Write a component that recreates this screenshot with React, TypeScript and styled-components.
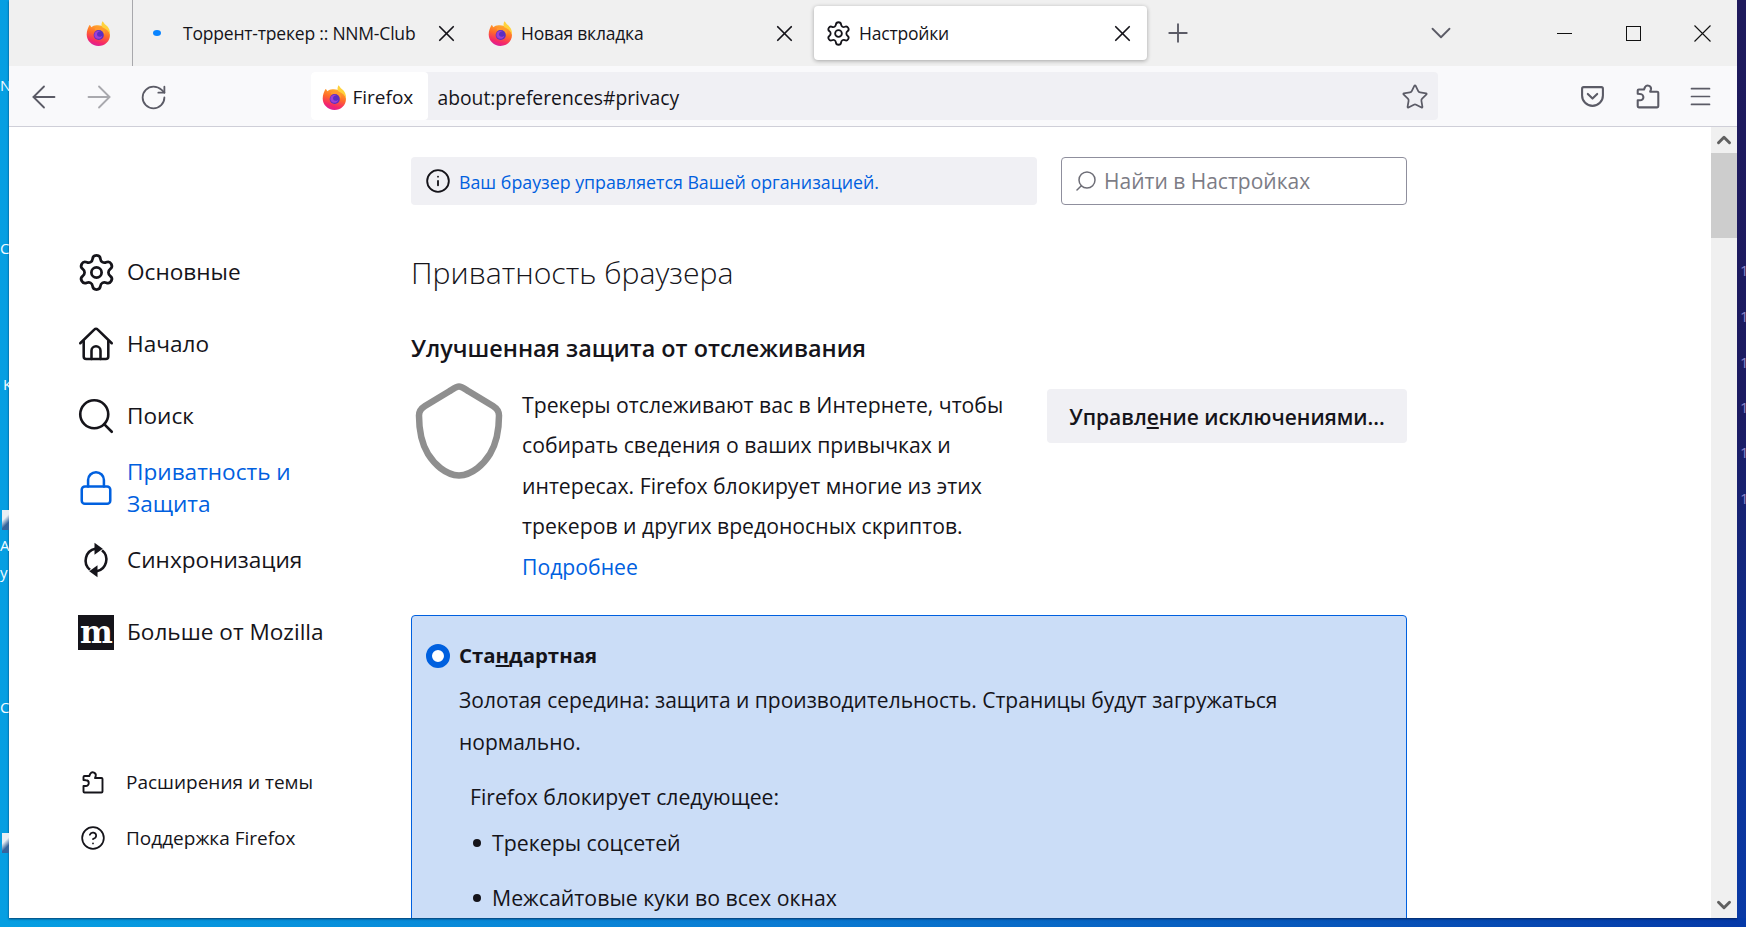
import { useId } from "react";
import styled, { createGlobalStyle } from "styled-components";
import {
  ArrowLeft,
  ArrowRight,
  ChevronDown,
  ChevronUp,
  CircleHelp,
  Info,
  Lock,
  Menu,
  Plus,
  RotateCw,
  Search,
  Settings,
  Star,
  X,
} from "lucide-react";

const INK = "#15141a";
const BLUE = "#0060df";
const FONT = `"Open Sans", "Noto Sans", sans-serif`;

const GlobalStyle = createGlobalStyle`
  html, body {
    margin: 0;
    padding: 0;
    width: 1746px;
    height: 927px;
    overflow: hidden;
    font-family: ${FONT};
    color: ${INK};
  }

  svg {
    flex: none;
  }
`;

const Desktop = styled.div`
  display: flex;
  width: 1746px;
  height: 927px;
  background: linear-gradient(90deg, #069fe2 0%, #0a7bd2 45%, #0539a8 100%);
`;

const LeftEdge = styled.div`
  position: relative;
  width: 9px;
  height: 918px;
  overflow: hidden;
`;

const DesktopGlyph = styled.span<{ $top: number; $left: number; $color?: string }>`
  position: absolute;
  top: ${(p) => p.$top}px;
  left: ${(p) => p.$left}px;
  font-size: 15px;
  line-height: 16px;
  color: ${(p) => p.$color ?? "#f4faff"};
`;

const DesktopIconStub = styled.span<{ $top: number }>`
  position: absolute;
  top: ${(p) => p.$top}px;
  left: 2px;
  width: 7px;
  height: 20px;
  background: linear-gradient(135deg, #e8eef4 40%, #36649c 70%);
`;

const RightEdge = styled.div`
  position: relative;
  width: 9px;
  height: 918px;
  overflow: hidden;
  background: linear-gradient(180deg, #1f1a5c 0%, #1c1b62 45%, #0f2f8f 72%, #0a3aa6 100%);
`;

const Window = styled.div`
  display: flex;
  flex-direction: column;
  width: 1728px;
  height: 918px;
  background: #fff;
  box-shadow: 0 1px 2px rgba(0, 20, 60, 0.7);
  overflow: hidden;
`;

const TabStrip = styled.div`
  display: flex;
  align-items: center;
  height: 66px;
  flex: none;
  background: #f0f0f0;
`;

const PinnedTab = styled.div`
  display: flex;
  align-items: center;
  justify-content: flex-end;
  width: 124px;
  height: 66px;
  padding-right: 20px;
  box-sizing: border-box;
  border-right: 1px solid #a8a8ac;
`;

const Tab = styled.div<{ $active?: boolean }>`
  display: flex;
  align-items: center;
  width: 333px;
  height: 54px;
  margin-left: 5px;
  padding: 0 11px 0 13px;
  box-sizing: border-box;
  font-size: 17.5px;
  border-radius: 4px;
  background: ${(p) => (p.$active ? "#fff" : "transparent")};
  box-shadow: ${(p) => (p.$active ? "0 1px 4px rgba(0, 0, 0, 0.32)" : "none")};
`;

const TabIcon = styled.span`
  display: flex;
  align-items: center;
  justify-content: center;
  flex: none;
  width: 22px;
  height: 24px;
  margin-right: 10px;
`;

const TabDot = styled.span`
  width: 8px;
  height: 6px;
  margin-right: 10px;
  border-radius: 50%;
  background: #0a84ff;
`;

const TabTitle = styled.span`
  flex: 1;
  white-space: nowrap;
  letter-spacing: -0.2px;
`;

const NewTab = styled.div`
  display: flex;
  margin-left: 16px;
  color: #5b5b66;
`;

const TabList = styled.div`
  display: flex;
  justify-content: center;
  width: 40px;
  margin-left: auto;
  margin-right: 69px;
  color: #5b5b66;
`;

const Controls = styled.div`
  display: flex;
`;

const ControlButton = styled.div`
  display: flex;
  align-items: center;
  justify-content: center;
  width: 69px;
  height: 66px;
`;

const Toolbar = styled.div`
  display: flex;
  align-items: center;
  height: 60px;
  flex: none;
  padding-left: 8px;
  background: #f9f9fb;
  border-bottom: 1px solid #cfcfd8;
`;

const NavButton = styled.div<{ $muted?: boolean }>`
  display: flex;
  justify-content: center;
  width: 54.5px;
  margin-top: 2px;
  color: ${(p) => (p.$muted ? "#a9a9ae" : "#5b5b66")};
`;

const UrlBar = styled.div`
  display: flex;
  align-items: center;
  width: 1127px;
  height: 48px;
  margin-left: 130px;
  border-radius: 4px;
  background: #f0f0f4;
`;

const IdentityChip = styled.div`
  display: flex;
  align-items: center;
  gap: 5px;
  width: 117px;
  height: 48px;
  padding: 2px 0 0 10px;
  box-sizing: border-box;
  border-radius: 4px;
  background: #fff;
  font-size: 19px;
`;

const UrlText = styled.div`
  flex: 1;
  margin-left: 10px;
  padding-top: 2px;
  font-size: 19.3px;
`;

const StarSlot = styled.div`
  display: flex;
  margin: 2px 9px 0 0;
  color: #5b5b66;
`;

const ToolbarActions = styled.div`
  display: flex;
  align-items: center;
  margin-left: 142px;
  gap: 30px;
  color: #5b5b66;
`;

const MenuSlot = styled.span`
  display: flex;
  margin-left: -4px;
`;

const Viewport = styled.div`
  display: flex;
  flex: 1;
  min-height: 0;
`;

const Sidebar = styled.nav`
  display: flex;
  flex-direction: column;
  flex: none;
  width: 402px;
  padding: 109px 0 0 69px;
  box-sizing: border-box;
`;

const NavItem = styled.div<{ $active?: boolean }>`
  display: flex;
  align-items: center;
  gap: 13px;
  height: 72px;
  font-size: 22.6px;
  line-height: 32px;
  color: ${(p) => (p.$active ? BLUE : INK)};
`;

const NavIcon = styled.span`
  display: flex;
  align-items: center;
  justify-content: center;
  flex: none;
  width: 36px;
  height: 36px;
`;

const MozillaMark = styled.span`
  display: flex;
  align-items: center;
  justify-content: center;
  flex: none;
  width: 36px;
  height: 35px;
  background: #15141a;
  color: #fff;
  font-family: "DejaVu Serif", serif;
  font-weight: 700;
  font-size: 31px;
  line-height: 28px;
  letter-spacing: -1px;
`;

const SidebarFooter = styled.div`
  display: flex;
  flex-direction: column;
  margin-top: 86px;
  padding-left: 3px;
`;

const FooterItem = styled.div`
  display: flex;
  align-items: center;
  gap: 21px;
  height: 56px;
  font-size: 19px;
`;

const FooterIcon = styled.span`
  display: flex;
  align-items: center;
  justify-content: center;
  flex: none;
  width: 24px;
`;

const Main = styled.main`
  flex: none;
  width: 996px;
  padding-top: 30px;
`;

const TopRow = styled.div`
  display: flex;
  gap: 24px;
`;

const PolicyNotice = styled.div`
  display: flex;
  align-items: center;
  gap: 8px;
  width: 626px;
  height: 48px;
  padding: 0 0 0 14px;
  box-sizing: border-box;
  border-radius: 4px;
  background: #f0f0f4;
  font-size: 17.8px;
  color: ${BLUE};
`;

const PolicyText = styled.span`
  padding-top: 2px;
`;

const SearchField = styled.div`
  display: flex;
  align-items: center;
  gap: 6px;
  width: 346px;
  height: 48px;
  padding-left: 12px;
  box-sizing: border-box;
  border: 1px solid #8f8f9d;
  border-radius: 4px;
  font-size: 21px;
  color: #7c7c85;
`;

const FlippedIcon = styled.span`
  display: flex;
  transform: scaleX(-1);
`;

const PageTitle = styled.h1`
  margin: 48px 0 0;
  font-size: 30.2px;
  line-height: 40px;
  font-weight: 300;
`;

const SectionTitle = styled.h2`
  margin: 40px 0 0;
  font-size: 23.4px;
  line-height: 30px;
  font-weight: 600;
`;

const IntroRow = styled.div`
  display: flex;
  margin-top: 22px;
`;

const ShieldBox = styled.div`
  flex: none;
  width: 111px;
  height: 96px;
  margin-top: -2px;
  margin-bottom: 2px;
  padding-left: 4px;
  box-sizing: border-box;
`;

const IntroText = styled.p`
  flex: none;
  width: 525px;
  margin: 0;
  font-size: 21.2px;
  line-height: 40.4px;
`;

const LearnMore = styled.a`
  display: block;
  color: ${BLUE};
`;

const ExceptionsButton = styled.div`
  display: flex;
  align-items: center;
  justify-content: center;
  flex: none;
  width: 360px;
  height: 54px;
  margin-top: 4px;
  padding-top: 2px;
  box-sizing: border-box;
  border-radius: 4px;
  background: #f0f0f4;
  font-size: 21px;
  font-weight: 600;
`;

const BlockingCard = styled.section`
  height: 400px;
  margin-top: 28px;
  padding: 24px 0 0 47px;
  box-sizing: border-box;
  border: 1px solid ${BLUE};
  border-radius: 4px;
  background: #cbddf7;
`;

const CardHeader = styled.div`
  position: relative;
  font-size: 20.4px;
  line-height: 30px;
  font-weight: 700;
`;

const Radio = styled.span`
  position: absolute;
  left: -33px;
  top: 4px;
  width: 12px;
  height: 12px;
  border: 6px solid ${BLUE};
  border-radius: 50%;
  background: #fff;
  box-sizing: content-box;
`;

const CardText = styled.p`
  margin: 10px 0 0;
  font-size: 21px;
  line-height: 41.5px;
`;

const BlocksLabel = styled.div`
  margin: 19px 0 0 11px;
  font-size: 21.2px;
  line-height: 30px;
`;

const BlocksList = styled.ul`
  display: flex;
  flex-direction: column;
  gap: 25px;
  margin: 16px 0 0 11px;
  padding: 0;
  list-style: none;
`;

const BlocksItem = styled.li`
  display: flex;
  align-items: center;
  gap: 11px;
  font-size: 21.3px;
  line-height: 30px;

  &::before {
    content: "";
    width: 8px;
    height: 8px;
    margin-left: 3px;
    border-radius: 50%;
    background: ${INK};
  }
`;

const Spacer = styled.div`
  flex: 1;
`;

const Scrollbar = styled.div`
  display: flex;
  flex-direction: column;
  flex: none;
  width: 26px;
  background: #f0f0f0;
`;

const ScrollArrow = styled.div<{ $end?: boolean }>`
  display: flex;
  align-items: center;
  justify-content: center;
  height: 26px;
  margin-top: ${(p) => (p.$end ? "auto" : "0")};
  color: #606060;
`;

const ScrollThumb = styled.div`
  height: 85px;
  background: #cdcdcd;
`;

const FirefoxLogo = ({ size = 27 }: { size?: number }) => {
  const id = useId();
  return (
    <svg width={size} height={size} viewBox="0 0 24 24">
      <defs>
        <linearGradient id={id} x1="0.7" y1="0" x2="0.35" y2="1">
          <stop offset="0" stopColor="#ffb52e" />
          <stop offset="0.45" stopColor="#ff6a2a" />
          <stop offset="0.8" stopColor="#f5276a" />
          <stop offset="1" stopColor="#d91e9a" />
        </linearGradient>
      </defs>
      <path
        fill={`url(#${id})`}
        d="M4 4.5c.6.2 1.3 1.2 1.5 2C7 5.2 8.7 4.6 10.5 4.7c3-.2 5 .5 6.5 1.7 2.5 1 5 3.4 5.2 6.6C22.4 18.800 17.600 23 12 23 6.200 23 1.500 18.400 1.500 12.800 1.500 9.500 2.800 6.800 4 4.500z"
      />
      <path fill="#ffd23c" d="M15.500 1c1.400 1.300 1.600 2.400 3 3.500 2.600 2 4 4.600 3.700 8.500-.9-3-3-5-6.700-6.500C14.300 5 14.500 3 15.500 1z" />
      <path fill="#ff9a2e" d="M8.500 7.500c2-1.600 4.500-1.700 6.500-.5 2.300 1.400 3.300 3.700 2.800 6-1-2.500-3-3.600-5.600-3.500-1.700 0-3.200.2-3.700-2z" />
      <circle cx="12.200" cy="13.300" r="4.500" fill="#5a2ec2" />
      <path fill="#9d3fd6" d="M8.500 12c.8-2 3.400-3 5.400-2-1.600 0-3 1-3.200 2.400-.2 1.500 1 2.600 2.400 2.500 1 0 1.800-.5 2.400-1.200-.4 2-2.200 3.300-4.200 3-2.300-.4-3.500-2.500-2.800-4.700z" />
    </svg>
  );
};

const ShieldIcon = () => (
  <svg width="88" height="96" viewBox="0 0 88 96" fill="none" stroke="#8f8f8f" strokeWidth="6.5" strokeLinejoin="round">
    <path d="M44 3.500C47 3.500 50 6 54 8.500L78 23c4 2.500 6 5 6 9.500 0 13-2 27-9 38.500-6 9.500-17 21-31 21.500-14-.5-25-12-31-21.500C6 59.500 4 45.500 4 32.500 4 28 6 25.500 10 23L34 8.500C38 6 41 3.500 44 3.500z" />
  </svg>
);

const HomeIcon = () => (
  <svg width="36" height="36" viewBox="0 0 24 24" fill="none" stroke={INK} strokeWidth="1.7" strokeLinecap="round" strokeLinejoin="round">
    <path d="M1.500 11.500 11 2.300a1.400 1.400 0 0 1 2 0l9.500 9.200" />
    <path d="M3.800 10v10.300a1.700 1.700 0 0 0 1.700 1.700h13a1.700 1.700 0 0 0 1.700-1.700V10" />
    <path d="M9 22v-5.500a3 3 0 0 1 6 0V22" />
  </svg>
);

const SyncIcon = () => (
  <svg width="36" height="36" viewBox="0 0 24 24" fill="none" stroke={INK} strokeWidth="1.7">
    <path d="M11.500 4.500A8 8 0 0 0 8 18.500" />
    <path d="M12.500 19.500A8 8 0 0 0 16 5.500" />
    <path fill={INK} stroke="none" d="M11 .5v8l5.500-4zM13 15.500v8l-5.500-4z" />
  </svg>
);

const PuzzleIcon = ({ size, color }: { size: number; color: string }) => (
  <svg width={size} height={size} viewBox="0 0 24 24" fill="none" stroke={color} strokeWidth="1.9" strokeLinejoin="round">
    <path d="M3.500 22.500a1 1 0 0 1-1-1V16h2.200a2.900 2.900 0 0 0 .3-5.800l-2.500-.2V7a1 1 0 0 1 1-1h4.800l1-2.300a3 3 0 0 1 5.400 2.400L14 8h6.500a1 1 0 0 1 1 1v12.500a1 1 0 0 1-1 1z" />
  </svg>
);

const PocketIcon = () => (
  <svg width="25" height="25" viewBox="0 0 24 24" fill="none" stroke="#5b5b66" strokeWidth="2" strokeLinecap="round" strokeLinejoin="round">
    <path d="M3.500 3h17A1.500 1.500 0 0 1 22 4.500V11a10 10 0 0 1-20 0V4.500A1.500 1.500 0 0 1 3.500 3z" />
    <path d="m7.500 9.500 4.500 4.500 4.500-4.500" />
  </svg>
);

const MinimizeIcon = () => (
  <svg width="15" height="15" viewBox="0 0 15 15" stroke="#111" strokeWidth="1">
    <path d="M0 7.500h15" />
  </svg>
);

const MaximizeIcon = () => (
  <svg width="15" height="15" viewBox="0 0 15 15" fill="none" stroke="#111" strokeWidth="1">
    <rect x="0.500" y="0.500" width="14" height="14" />
  </svg>
);

const CloseIcon = () => (
  <svg width="17" height="17" viewBox="0 0 17 17" stroke="#111" strokeWidth="1.100">
    <path d="m.5.5 16 16M16.500.5l-16 16" />
  </svg>
);

const leftGlyphs = [
  { text: "N", top: 77, left: 0 },
  { text: "C", top: 240, left: 0 },
  { text: "K", top: 376, left: 3 },
  { text: "A", top: 537, left: 0 },
  { text: "y", top: 564, left: 0 },
  { text: "C", top: 699, left: 0 },
];

const rightGlyphs = [262, 308, 354, 399, 444, 490];

const navItems = [
  { label: "Основные", icon: <Settings size={41} strokeWidth={1.6} color={INK} /> },
  { label: "Начало", icon: <HomeIcon /> },
  { label: "Поиск", icon: <Search size={42} strokeWidth={1.5} color={INK} /> },
];

const App = () => (
  <>
    <GlobalStyle />
    <Desktop>
      <LeftEdge>
        {leftGlyphs.map((g) => (
          <DesktopGlyph key={g.top} $top={g.top} $left={g.left}>
            {g.text}
          </DesktopGlyph>
        ))}
        <DesktopIconStub $top={510} />
        <DesktopIconStub $top={833} />
      </LeftEdge>
      <Window>
        <TabStrip>
          <PinnedTab>
            <FirefoxLogo />
          </PinnedTab>
          <Tab>
            <TabIcon>
              <TabDot />
            </TabIcon>
            <TabTitle>Торрент-трекер :: NNM-Club</TabTitle>
            <X size={27} strokeWidth={1.5} />
          </Tab>
          <Tab>
            <TabIcon>
              <FirefoxLogo />
            </TabIcon>
            <TabTitle>Новая вкладка</TabTitle>
            <X size={27} strokeWidth={1.5} />
          </Tab>
          <Tab $active>
            <TabIcon>
              <Settings size={27} strokeWidth={1.6} color={INK} />
            </TabIcon>
            <TabTitle>Настройки</TabTitle>
            <X size={27} strokeWidth={1.5} />
          </Tab>
          <NewTab>
            <Plus size={30} strokeWidth={1.5} />
          </NewTab>
          <TabList>
            <ChevronDown size={34} strokeWidth={1.3} />
          </TabList>
          <Controls>
            <ControlButton>
              <MinimizeIcon />
            </ControlButton>
            <ControlButton>
              <MaximizeIcon />
            </ControlButton>
            <ControlButton>
              <CloseIcon />
            </ControlButton>
          </Controls>
        </TabStrip>
        <Toolbar>
          <NavButton>
            <ArrowLeft size={36} strokeWidth={1.2} />
          </NavButton>
          <NavButton $muted>
            <ArrowRight size={36} strokeWidth={1.2} />
          </NavButton>
          <NavButton>
            <RotateCw size={29} strokeWidth={1.5} />
          </NavButton>
          <UrlBar>
            <IdentityChip>
              <FirefoxLogo />
              Firefox
            </IdentityChip>
            <UrlText>about:preferences#privacy</UrlText>
            <StarSlot>
              <Star size={28} strokeWidth={1.5} />
            </StarSlot>
          </UrlBar>
          <ToolbarActions>
            <PocketIcon />
            <PuzzleIcon size={26} color="#5b5b66" />
            <MenuSlot>
              <Menu size={27} strokeWidth={1.5} />
            </MenuSlot>
          </ToolbarActions>
        </Toolbar>
        <Viewport>
          <Sidebar>
            {navItems.map((item) => (
              <NavItem key={item.label}>
                <NavIcon>{item.icon}</NavIcon>
                {item.label}
              </NavItem>
            ))}
            <NavItem $active>
              <NavIcon>
                <Lock size={38} strokeWidth={1.6} color={BLUE} />
              </NavIcon>
              <span>
                Приватность и
                <br />
                Защита
              </span>
            </NavItem>
            <NavItem>
              <NavIcon>
                <SyncIcon />
              </NavIcon>
              Синхронизация
            </NavItem>
            <NavItem>
              <MozillaMark>m</MozillaMark>
              Больше от Mozilla
            </NavItem>
            <SidebarFooter>
              <FooterItem>
                <FooterIcon>
                  <PuzzleIcon size={24} color={INK} />
                </FooterIcon>
                Расширения и темы
              </FooterItem>
              <FooterItem>
                <FooterIcon>
                  <CircleHelp size={26} strokeWidth={1.6} color={INK} />
                </FooterIcon>
                Поддержка Firefox
              </FooterItem>
            </SidebarFooter>
          </Sidebar>
          <Main>
            <TopRow>
              <PolicyNotice>
                <Info size={26} strokeWidth={1.7} color={INK} />
                <PolicyText>Ваш браузер управляется Вашей организацией.</PolicyText>
              </PolicyNotice>
              <SearchField>
                <FlippedIcon>
                  <Search size={24} strokeWidth={1.5} color="#6d6d76" />
                </FlippedIcon>
                Найти в Настройках
              </SearchField>
            </TopRow>
            <PageTitle>Приватность браузера</PageTitle>
            <SectionTitle>Улучшенная защита от отслеживания</SectionTitle>
            <IntroRow>
              <ShieldBox>
                <ShieldIcon />
              </ShieldBox>
              <IntroText>
                Трекеры отслеживают вас в Интернете, чтобы
                <br />
                собирать сведения о ваших привычках и
                <br />
                интересах. Firefox блокирует многие из этих
                <br />
                трекеров и других вредоносных скриптов.
                <LearnMore>Подробнее</LearnMore>
              </IntroText>
              <ExceptionsButton>
                <span>
                  Управл<u>е</u>ние исключениями...
                </span>
              </ExceptionsButton>
            </IntroRow>
            <BlockingCard>
              <CardHeader>
                <Radio />
                Ста<u>н</u>дартная
              </CardHeader>
              <CardText>
                Золотая середина: защита и производительность. Страницы будут загружаться
                <br />
                нормально.
              </CardText>
              <BlocksLabel>Firefox блокирует следующее:</BlocksLabel>
              <BlocksList>
                <BlocksItem>Трекеры соцсетей</BlocksItem>
                <BlocksItem>Межсайтовые куки во всех окнах</BlocksItem>
              </BlocksList>
            </BlockingCard>
          </Main>
          <Spacer />
          <Scrollbar>
            <ScrollArrow>
              <ChevronUp size={22} strokeWidth={3.2} />
            </ScrollArrow>
            <ScrollThumb />
            <ScrollArrow $end>
              <ChevronDown size={22} strokeWidth={3.2} />
            </ScrollArrow>
          </Scrollbar>
        </Viewport>
      </Window>
      <RightEdge>
        {rightGlyphs.map((top) => (
          <DesktopGlyph key={top} $top={top} $left={3} $color="#8c86c8">
            1
          </DesktopGlyph>
        ))}
      </RightEdge>
    </Desktop>
  </>
);

export default App;
